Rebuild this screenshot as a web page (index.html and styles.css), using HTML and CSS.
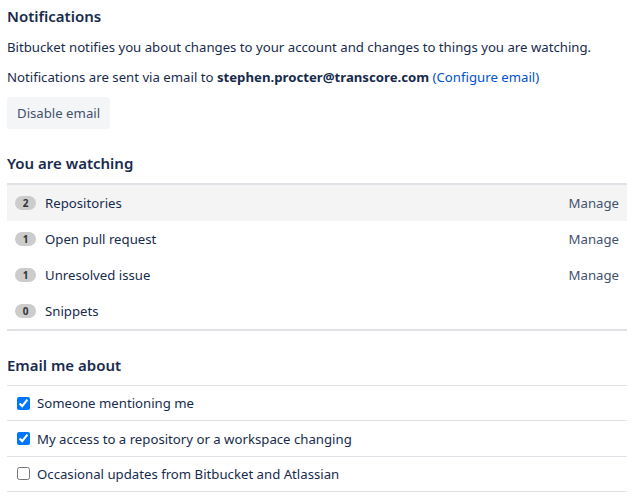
FILE: index.html
```html
<!DOCTYPE html>
<html lang="en">
<head>
    <meta charset="UTF-8">
    <meta name="viewport" content="width=device-width, initial-scale=1.0">
    <title>Notifications</title>
    <link rel="stylesheet" href="styles.css">
</head>
<body>
    <div class="page">
        <h2>Notifications</h2>
        <p>Bitbucket notifies you about changes to your account and changes to things you are watching.</p>
        <p>Notifications are sent via email to <strong>stephen.procter@transcore.com</strong> <a href="#">(Configure email)</a></p>
        <button class="btn">Disable email</button>

        <h3>You are watching</h3>
        <ul class="watching">
            <li class="active"><span class="badge">2</span><span class="label">Repositories</span><a href="#" class="manage">Manage</a></li>
            <li><span class="badge">1</span><span class="label">Open pull request</span><a href="#" class="manage">Manage</a></li>
            <li><span class="badge">1</span><span class="label">Unresolved issue</span><a href="#" class="manage">Manage</a></li>
            <li><span class="badge">0</span><span class="label">Snippets</span></li>
        </ul>

        <h3>Email me about</h3>
        <ul class="email-prefs">
            <li><label><input type="checkbox" checked> Someone mentioning me</label></li>
            <li><label><input type="checkbox" checked> My access to a repository or a workspace changing</label></li>
            <li><label><input type="checkbox"> Occasional updates from Bitbucket and Atlassian</label></li>
        </ul>
    </div>
</body>
</html>
```
FILE: styles.css
```css
body {
    margin: 0;
    padding: 0 7px;
    font-family: "Noto Sans", "Open Sans", sans-serif;
    font-size: 13.2px;
    color: #172b4d;
    background-color: #fff;
}

.page {
    width: 620px;
}

h2,
h3 {
    font-size: 15px;
    font-weight: 600;
    margin: 0;
    line-height: 20px;
}

h2 {
    padding-top: 6px;
    margin-bottom: 11px;
}

h3 {
    margin-top: 24px;
    margin-bottom: 10px;
}

p {
    margin: 0 0 10px 0;
    line-height: 20px;
}

strong {
    font-weight: 700;
}

a {
    color: #0052cc;
    text-decoration: none;
}

.btn {
    font-family: inherit;
    font-size: 13.2px;
    color: #42526e;
    background-color: #f4f5f7;
    border: none;
    border-radius: 3px;
    height: 32px;
    padding: 0 10px;
}

ul {
    list-style: none;
    margin: 0;
    padding: 0;
}

.watching {
    border-top: 2px solid #dfe1e6;
    border-bottom: 2px solid #dfe1e6;
}

.watching li {
    display: flex;
    align-items: center;
    height: 36px;
    padding: 0 8px;
}

.watching li.active {
    background-color: #f4f4f4;
}

.badge {
    display: inline-block;
    min-width: 21px;
    height: 14px;
    line-height: 14px;
    border-radius: 7px;
    background-color: #cccccc;
    color: #333;
    font-size: 10px;
    font-weight: 700;
    text-align: center;
    margin-right: 9px;
}

.label {
    flex: 1;
}

.manage {
    color: #42526e;
}

.email-prefs li {
    border-top: 1px solid #dfe1e6;
    height: 34.4px;
    display: flex;
    align-items: center;
    padding: 0 10px;
}

.email-prefs li:last-child {
    border-bottom: 1px solid #dfe1e6;
}

.email-prefs label {
    display: flex;
    align-items: center;
}

.email-prefs input {
    width: 13px;
    height: 13px;
    margin: 0 7px 0 0;
}
```
